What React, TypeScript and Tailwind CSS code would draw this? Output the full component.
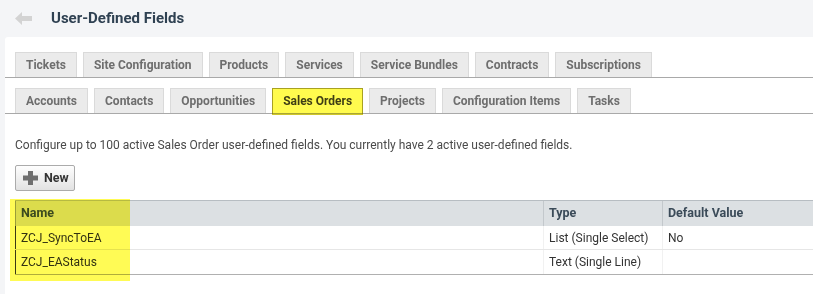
import React from "react";

const row1 = ["Tickets", "Site Configuration", "Products", "Services", "Service Bundles", "Contracts", "Subscriptions"];
const row2 = ["Accounts", "Contacts", "Opportunities", "Sales Orders", "Projects", "Configuration Items", "Tasks"];

function Tab({ label, active }: { label: string; active?: boolean }) {
  if (active) {
    return (
      <div className="relative h-[25px] px-[10px] flex items-center bg-white border border-b-0 border-[#cfcfcf] text-[12px] font-bold text-[#3f3f3f]">
        {label}
        <div className="absolute left-[-1px] right-[-1px] top-[-1px] bottom-[-2px] bg-[#fffb4e] mix-blend-multiply border border-[#cfc62a]" />
      </div>
    );
  }
  return (
    <div className="h-[25px] px-[10px] flex items-center bg-[#ebebeb] border border-b-0 border-[#dadada] text-[12px] font-bold text-[#6e6e6e]">
      {label}
    </div>
  );
}

export default function App() {
  return (
    <div className="w-[813px] h-[294px] bg-[#f4f5f7] overflow-hidden font-['Roboto',sans-serif]">
      <div className="h-[37px] flex items-center pl-[15px]">
        <svg width="17" height="13" viewBox="0 0 17 13" className="mt-[-1px]">
          <path d="M0 6.5 L7 0 L7 4 L17 4 L17 9 L7 9 L7 13 Z" fill="#d3d3d3" />
        </svg>
        <div className="ml-[19px] text-[15px] font-bold text-[#2f4152] mt-[-1px]">User-Defined Fields</div>
      </div>
      <div className="ml-[5px] h-[257px] bg-white rounded-tl-[3px] pt-[15px]">
        <div className="flex gap-[6px] pl-[10px] border-b border-[#a9a9a9]">
          {row1.map((t) => (
            <Tab key={t} label={t} />
          ))}
        </div>
        <div className="flex gap-[6px] pl-[10px] border-b border-[#a9a9a9] mt-[10px]">
          {row2.map((t) => (
            <Tab key={t} label={t} active={t === "Sales Orders"} />
          ))}
        </div>
        <div className="pl-[10px] mt-[23px] text-[12px] leading-[16px] text-[#4a4a4a]">
          Configure up to 100 active Sales Order user-defined fields. You currently have 2 active user-defined fields.
        </div>
        <div className="pl-[10px] mt-[12px]">
          <div className="w-[60px] h-[26px] flex items-center gap-[6px] pl-[7px] border border-[#ababab] rounded-[2px] bg-gradient-to-b from-[#fefefe] to-[#e2e2e2]">
            <svg width="15" height="14" viewBox="0 0 15 14">
              <path d="M5 0 H10 V4.5 H15 V9.5 H10 V14 H5 V9.5 H0 V4.5 H5 Z" fill="#6f6f6f" />
            </svg>
            <span className="text-[12.5px] font-bold text-[#333]">New</span>
          </div>
        </div>
        <div className="relative ml-[10px] mt-[9px] text-[12px]">
          <div className="flex h-[26px] bg-[#dce0e3] border-t border-[#b7bdc2] font-bold text-[12.5px] text-[#3b4b59]">
            <div className="w-[528px] pl-[5px] flex items-center border-l border-[#9aa0a4]">Name</div>
            <div className="w-[119px] pl-[5px] flex items-center border-l border-[#c3c8cc]">Type</div>
            <div className="flex-1 pl-[5px] flex items-center border-l border-[#c3c8cc]">Default Value</div>
          </div>
          <div className="flex h-[24px] border-b border-[#e6e6e6] text-[#333]">
            <div className="w-[528px] pl-[5px] flex items-center border-l border-[#3a3a3a]">ZCJ_SyncToEA</div>
            <div className="w-[119px] pl-[5px] flex items-center border-l border-[#f1f1f1]">List (Single Select)</div>
            <div className="flex-1 pl-[5px] flex items-center border-l border-[#f1f1f1]">No</div>
          </div>
          <div className="flex h-[25px] border-b border-[#b0b0b0] text-[#333]">
            <div className="w-[528px] pl-[5px] flex items-center border-l border-[#3a3a3a]">ZCJ_EAStatus</div>
            <div className="w-[119px] pl-[5px] flex items-center border-l border-[#f1f1f1]">Text (Single Line)</div>
            <div className="flex-1 pl-[5px] flex items-center border-l border-[#f1f1f1]"></div>
          </div>
          <div className="absolute left-[-5px] top-[-1px] w-[120px] h-[82px] bg-[#fffb55] mix-blend-multiply" />
        </div>
      </div>
    </div>
  );
}
